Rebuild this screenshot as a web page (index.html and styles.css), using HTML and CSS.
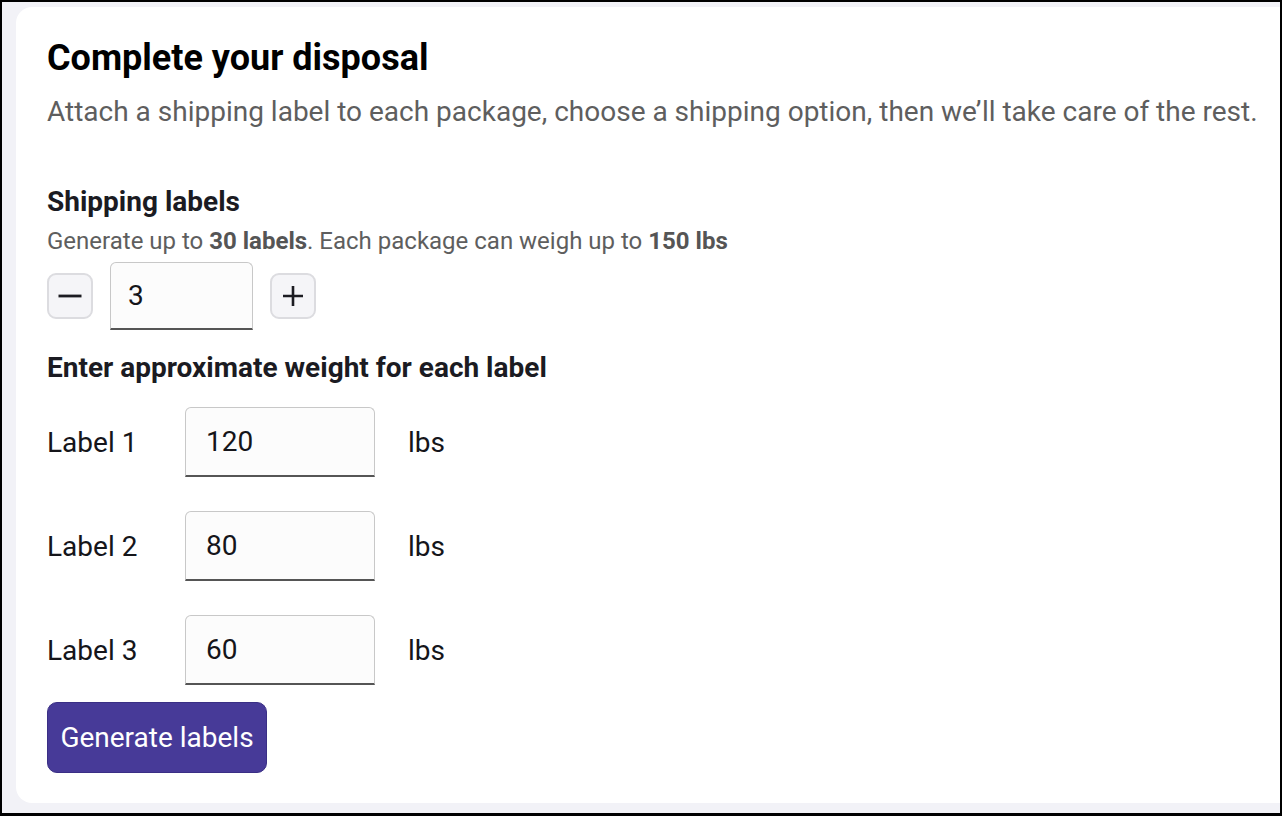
FILE: index.html
```html
<!DOCTYPE html>
<html>
<head>
<meta charset="utf-8">
<link rel="stylesheet" href="styles.css">
</head>
<body>
<div class="frame">
  <div class="card">
    <h1 class="title">Complete your disposal</h1>
    <p class="subtitle">Attach a shipping label to each package, choose a shipping option, then we’ll take care of the rest.</p>

    <h2 class="section-title shipping-title">Shipping labels</h2>
    <p class="hint">Generate up to <b>30 labels</b>. Each package can weigh up to <b>150 lbs</b></p>
    <div class="stepper">
      <button class="step-btn" aria-label="Decrease">
        <svg width="26" height="26" viewBox="0 0 26 26"><path d="M1.5 13h23" stroke="#1c1c22" stroke-width="2.8" fill="none"/></svg>
      </button>
      <div class="field count">3</div>
      <button class="step-btn" aria-label="Increase">
        <svg width="26" height="26" viewBox="0 0 26 26"><path d="M3 13h20M13 3v20" stroke="#1c1c22" stroke-width="2.6" fill="none"/></svg>
      </button>
    </div>

    <h2 class="section-title weights-title">Enter approximate weight for each label</h2>
    <div class="rows">
      <div class="row"><span class="row-label">Label 1</span><div class="field weight">120</div><span class="unit">lbs</span></div>
      <div class="row"><span class="row-label">Label 2</span><div class="field weight">80</div><span class="unit">lbs</span></div>
      <div class="row"><span class="row-label">Label 3</span><div class="field weight">60</div><span class="unit">lbs</span></div>
    </div>

    <button class="primary">Generate labels</button>
  </div>
</div>
</body>
</html>
```
FILE: styles.css
```css
* { box-sizing: border-box; }
html, body { margin: 0; padding: 0; }
body {
  font-family: Roboto, "Liberation Sans", sans-serif;
  background: #000;
}
.frame {
  width: 1282px;
  height: 816px;
  border: 2px solid #000;
  border-bottom-width: 3px;
  background: #f2f2f7;
  padding: 5px 0 0 14px;
  overflow: hidden;
}
.card {
  width: 1300px;
  height: 796px;
  background: #fff;
  border-radius: 16px;
  padding: 29px 0 0 31px;
}
.title {
  margin: 0;
  font-size: 36px;
  line-height: 44px;
  font-weight: 700;
  color: #000;
}
.subtitle {
  margin: 14px 0 0;
  font-size: 28px;
  line-height: 36px;
  color: #5e5e5e;
}
.section-title {
  margin: 0;
  font-size: 28px;
  line-height: 36px;
  font-weight: 700;
  color: #1b1b22;
}
.shipping-title { margin-top: 54px; }
.hint {
  margin: 6px 0 0;
  font-size: 24px;
  line-height: 30px;
  color: #5e5e5e;
}
.hint b { font-weight: 700; color: #555; }
.stepper {
  display: flex;
  align-items: center;
  gap: 17px;
  margin-top: 6px;
}
.step-btn {
  width: 46px;
  height: 46px;
  border: 2px solid #dcdce0;
  border-radius: 9px;
  background: #f5f5f8;
  display: flex;
  align-items: center;
  justify-content: center;
  padding: 0;
}
.field {
  border: 1.5px solid #c8c8c8;
  border-bottom: 2px solid #555;
  border-radius: 6px 6px 0 0;
  background: #fcfcfc;
  font-size: 28px;
  color: #15151a;
  display: flex;
  align-items: center;
  padding-left: 17px;
}
.count { width: 143px; height: 68px; }
.weights-title { margin-top: 20px; }
.rows {
  display: flex;
  flex-direction: column;
  gap: 34px;
  margin-top: 21px;
}
.row {
  display: flex;
  align-items: center;
}
.row-label {
  width: 138px;
  font-size: 28px;
  color: #15151a;
}
.weight { width: 190px; height: 70px; padding-left: 20px; }
.unit {
  margin-left: 33px;
  font-size: 28px;
  color: #15151a;
}
.primary {
  margin-top: 17px;
  width: 220px;
  height: 71px;
  border: 1px solid #3a2f85;
  border-radius: 10px;
  background: #473a98;
  color: #fff;
  font-family: Roboto, "Liberation Sans", sans-serif;
  font-size: 28px;
  padding: 0;
}
```
